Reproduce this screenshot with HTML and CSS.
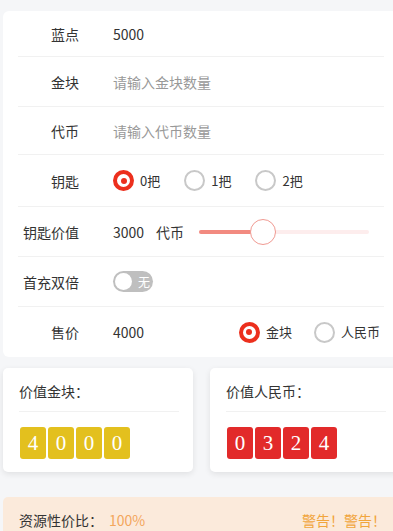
FILE: index.html
```html
<!DOCTYPE html>
<html lang="zh">
<head>
<meta charset="utf-8">
<title>价值计算</title>
<link rel="stylesheet" href="styles.css">
</head>
<body>
<div class="page">
  <div class="panel">
    <div class="row r1">
      <div class="label">蓝点</div>
      <div class="value">5000</div>
    </div>
    <div class="row r2">
      <div class="label">金块</div>
      <div class="value placeholder">请输入金块数量</div>
    </div>
    <div class="row r3">
      <div class="label">代币</div>
      <div class="value placeholder">请输入代币数量</div>
    </div>
    <div class="row r4">
      <div class="label">钥匙</div>
      <div class="value radios">
        <span class="radio-item"><span class="radio on"></span><span class="rtext">0把</span></span>
        <span class="radio-item"><span class="radio"></span><span class="rtext">1把</span></span>
        <span class="radio-item"><span class="radio"></span><span class="rtext">2把</span></span>
      </div>
    </div>
    <div class="row r5">
      <div class="label">钥匙价值</div>
      <div class="value slider-wrap">
        <span class="num">3000</span>
        <span class="unit">代币</span>
        <div class="slider">
          <div class="track"></div>
          <div class="fill"></div>
          <div class="thumb"></div>
        </div>
      </div>
    </div>
    <div class="row r6">
      <div class="label">首充双倍</div>
      <div class="value">
        <span class="switch"><span class="knob"></span><span class="stext">无</span></span>
      </div>
    </div>
    <div class="row r7 last">
      <div class="label">售价</div>
      <div class="value price">
        <span class="num">4000</span>
        <div class="radios end">
          <span class="radio-item"><span class="radio on"></span><span class="rtext">金块</span></span>
          <span class="radio-item"><span class="radio"></span><span class="rtext">人民币</span></span>
        </div>
      </div>
    </div>
  </div>

  <div class="cards">
    <div class="card">
      <div class="card-title">价值金块：</div>
      <div class="digits gold">
        <span class="d">4</span><span class="d">0</span><span class="d">0</span><span class="d">0</span>
      </div>
    </div>
    <div class="card">
      <div class="card-title">价值人民币：</div>
      <div class="digits red">
        <span class="d">0</span><span class="d">3</span><span class="d">2</span><span class="d">4</span>
      </div>
    </div>
  </div>

  <div class="banner">
    <div class="ratio"><span>资源性价比：</span><span class="pct">100%</span></div>
    <div class="warn">警告！警告！</div>
  </div>
</div>
</body>
</html>
```
FILE: styles.css
```css
html, body {
  margin: 0;
  padding: 0;
}
body {
  background: #f5f6f8;
  font-family: "Noto Sans CJK SC", "Liberation Sans", sans-serif;
  font-size: 14px;
  color: #333;
  overflow: hidden;
  width: 393px;
  height: 531px;
}
.page {
  padding-top: 11px;
  padding-left: 3px;
  overflow: hidden;
}
.panel {
  background: #fff;
  border-radius: 6px;
  margin-right: -10px;
  padding: 0 19px 0 15px;
}
.row {
  display: flex;
  align-items: center;
  border-bottom: 1px solid #f1f1f1;
  box-sizing: border-box;
}
.row.last { border-bottom: none; }
.r1 { height: 46px; }
.r2 { height: 50px; }
.r3 { height: 48px; }
.r4 { height: 52px; }
.r5 { height: 50px; }
.r6 { height: 50px; }
.r7 { height: 50px; }
.label {
  width: 61px;
  text-align: right;
  flex: none;
  line-height: 20px;
}
.value {
  margin-left: 34px;
  flex: 1;
  display: flex;
  align-items: center;
  line-height: 20px;
}
.placeholder { color: #999; }
.radios {
  display: flex;
  align-items: center;
  gap: 24px;
}
.radios.end { margin-left: auto; gap: 22px; margin-right: 4px; }
.radio-item {
  display: flex;
  align-items: center;
  gap: 6px;
}
.radio {
  width: 21px;
  height: 21px;
  box-sizing: border-box;
  border-radius: 50%;
  border: 2px solid #c8c8c8;
  background: #fff;
  position: relative;
}
.radio.on {
  border: 4px solid #ec2f1d;
  background: #fff;
}
.radio.on::after {
  content: "";
  position: absolute;
  left: 50%;
  top: 50%;
  width: 6px;
  height: 6px;
  margin: -3px 0 0 -3px;
  border-radius: 50%;
  background: #ec2f1d;
}
.rtext { font-size: 13px; color: #333; }
.slider-wrap .unit { margin-left: 12px; }
.slider {
  position: relative;
  width: 170px;
  height: 26px;
  margin-left: 15px;
}
.slider .track {
  position: absolute;
  left: 0; right: 0;
  top: 11px;
  height: 4px;
  border-radius: 2px;
  background: #fdeded;
}
.slider .fill {
  position: absolute;
  left: 0;
  width: 64px;
  top: 11px;
  height: 4px;
  border-radius: 2px;
  background: #f28a80;
}
.slider .thumb {
  position: absolute;
  left: 51px;
  top: 0;
  width: 26px;
  height: 26px;
  box-sizing: border-box;
  border-radius: 50%;
  border: 1px solid #f09a92;
  background: #fff;
}
.switch {
  position: relative;
  display: inline-block;
  width: 40px;
  height: 21px;
  border-radius: 11px;
  background: #bfbfbf;
}
.switch .knob {
  position: absolute;
  left: 2px;
  top: 2px;
  width: 17px;
  height: 17px;
  border-radius: 50%;
  background: #fff;
}
.switch .stext {
  position: absolute;
  right: 3px;
  top: 0;
  line-height: 21px;
  font-size: 12px;
  color: #fff;
}
.cards {
  display: grid;
  grid-template-columns: 190px 190px;
  column-gap: 17px;
  margin-top: 11px;
}
.card {
  background: #fff;
  border-radius: 5px;
  box-shadow: 0 2px 6px rgba(0,0,0,0.09);
  padding: 13px 14px 13px 16px;
  height: 104px;
  box-sizing: border-box;
}
.card-title {
  line-height: 20px;
  padding-bottom: 10px;
  border-bottom: 1px solid #f1f1f1;
}
.digits {
  display: flex;
  gap: 2px;
  margin-top: 15px;
  margin-left: 1px;
}
.digits .d {
  width: 26px;
  height: 32px;
  border-radius: 3px;
  color: #fff;
  font-family: "Liberation Serif", "DejaVu Serif", serif;
  font-size: 21px;
  line-height: 32px;
  text-align: center;
}
.gold .d { background: #e3c01e; }
.red .d { background: #e22a2a; }
.banner {
  margin-top: 25px;
  margin-right: -10px;
  background: #fbeadb;
  border-radius: 5px;
  display: flex;
  justify-content: space-between;
  align-items: center;
  padding: 13px 26px 13px 16px;
  line-height: 20px;
}
.pct { color: #f3a65c; margin-left: 6px; }
.warn { color: #f1a53d; margin-right: -9px; }
```
